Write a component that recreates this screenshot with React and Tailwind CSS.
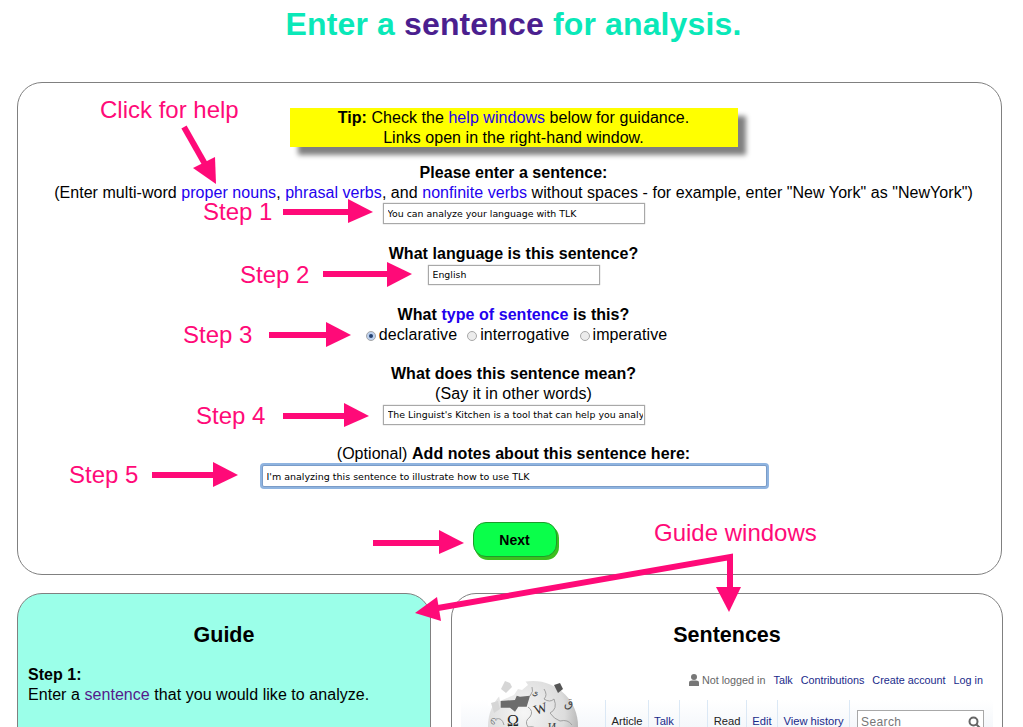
const font = { fontFamily: '"Liberation Sans", Arial, sans-serif' }

function Label({ className, children }) {
  return <div className={`absolute whitespace-nowrap text-[24px] leading-7 tracking-normal text-[#ff0a78] ${className}`}>{children}</div>
}

function Link({ children }) {
  return <span className="text-[#2200ee]">{children}</span>
}

function Field({ value, className }) {
  return (
    <input
      readOnly
      value={value}
      className={`block bg-white border border-[#a8a8a8] shadow-[0_0_1px_#a8a8a8] pl-[4px] pr-[1px] text-[9.4px] tracking-normal text-black outline-none font-['DejaVu_Sans',sans-serif] ${className}`}
    />
  )
}

function Radio({ checked, label }) {
  return (
    <span className="flex items-center">
      <span className={`flex items-center justify-center w-[10px] h-[10px] rounded-full border border-[#a8a8a8] mr-[3px] mt-[2px] ${checked ? 'bg-[#bcd0ee]' : 'bg-[#ececec]'}`}>
        {checked && <span className="w-[4px] h-[4px] rounded-full bg-[#24406e]" />}
      </span>
      {label}
    </span>
  )
}

// pink annotation arrows, drawn in page coordinates over the form
function Arrows() {
  const straight = [
    [283, 348, 212, 199, 223, 373],
    [323, 387, 274, 262, 287, 412],
    [269, 326, 335, 322, 347, 351],
    [283, 344, 416, 403, 427, 369],
    [152, 213, 475, 462, 487, 238],
    [373, 439, 543, 530, 554, 464],
  ]
  return (
    <svg className="absolute inset-0 w-[1023px] h-[727px] pointer-events-none" viewBox="0 0 1023 727">
      <g fill="#ff0a78" stroke="none">
        {straight.map(([x1, x2, y, top, bottom, tip]) => (
          <g key={y}>
            <rect x={x1} y={y - 3} width={x2 - x1 + 1} height="6" />
            <polygon points={`${x2},${top} ${tip},${y} ${x2},${bottom}`} />
          </g>
        ))}
        <polygon points="193,168 215,157 216,184" />
        <polygon points="716,587 741,587 729,612" />
        <polygon points="415,613 437,597 441,621" />
      </g>
      <g stroke="#ff0a78" strokeWidth="6" fill="none">
        <line x1="184" y1="127" x2="205" y2="164" />
        <polyline points="438,608 730,557 730,590" />
      </g>
    </svg>
  )
}

function WikiGlobe() {
  return (
    <svg width="90" height="90" viewBox="0 0 90 90">
      <defs>
        <radialGradient id="globe" cx="40%" cy="35%" r="70%">
          <stop offset="0%" stopColor="#f6f6f6" />
          <stop offset="65%" stopColor="#dcdcdc" />
          <stop offset="100%" stopColor="#a4a4a4" />
        </radialGradient>
      </defs>
      <circle cx="45" cy="45" r="45" fill="url(#globe)" />
      {/* missing puzzle pieces at the top left */}
      <path d="M-2 -2 H36 L40 4 L34 9 L30 8 L26 14 L12 20 L10 10 L6 18 L3 24 L-2 26 Z" fill="#fff" />
      <path d="M17 0 L13 8 L18 12 L24 6 L22 2 Z M3 22 L10 20 L12 28 L6 32 Z" fill="#d6d6d6" />
      <path d="M12.7 20 L27 19 L28.7 14.7 L32 15.7 L42 14.7 L38.7 25.7 L30.3 25.7 L27 30.7 L22 26.7 L12.7 26.7 Z" fill="#6c6c6c" />
      <path d="M42 15 Q46 10 44 6 M40 26 Q46 30 42 36 Q36 40 40 46 M56 8 Q60 14 56 18 Q62 22 66 18 M66 18 Q70 28 62 32 Q66 38 72 40 M72 40 Q80 38 84 44 M40 46 Q50 44 52 54 M20 44 Q24 50 18 56 M8 38 Q14 36 16 44" stroke="#a0a0a0" strokeWidth="1" fill="none" />
      <text x="25" y="45" fontSize="16" fill="#222" textAnchor="middle" fontFamily="Liberation Serif, serif">Ω</text>
      <text x="54" y="32" fontSize="14" fill="#333" textAnchor="middle" fontFamily="Liberation Serif, serif" transform="rotate(-18 54 32)">W</text>
      <text x="80" y="26" fontSize="12" fill="#444" textAnchor="middle" fontFamily="Liberation Serif, serif">ق</text>
      <text x="47" y="14" fontSize="8" fill="#444" textAnchor="middle" fontFamily="Liberation Serif, serif">ي</text>
      <path d="M66 4 L72 2 L75 8 L70 12 Z" fill="#555" />
      <text x="5" y="42" fontSize="7" fill="#555" textAnchor="middle" fontFamily="Liberation Serif, serif" transform="rotate(-70 5 40)">の</text>
      <text x="64" y="50" fontSize="12" fill="#444" textAnchor="middle" fontFamily="Liberation Serif, serif">И</text>
    </svg>
  )
}

function Tab({ className, children }) {
  return <span className={`h-[40px] pt-[15px] text-center border-l border-[#dbe8f5] ${className}`}>{children}</span>
}

function WikiHeader() {
  return (
    <div className="relative mx-[9px] mt-[26px] h-[80px] text-[10.8px] leading-[13px] tracking-normal text-[#1a2a8a]">
      <div className="flex justify-end items-center gap-[8px] pr-[10px] h-[14px]">
        <span className="flex items-center gap-[3px] text-[#666]">
          <svg width="10" height="12" viewBox="0 0 10 12"><circle cx="5" cy="3" r="3" fill="#777" /><path d="M0 12 V8.5 Q0 6.5 3 6.5 H7 Q10 6.5 10 8.5 V12 Z" fill="#777" /></svg>
          Not logged in
        </span>
        <span>Talk</span>
        <span>Contributions</span>
        <span>Create account</span>
        <span>Log in</span>
      </div>
      <div className="flex mt-[13px] pl-[144px] h-[40px] text-[11.2px] bg-gradient-to-b from-white to-[#f0f4f9]">
        <Tab className="w-[43px] text-[#222]">Article</Tab>
        <Tab className="w-[31px]">Talk</Tab>
        <Tab className="w-[28px]" />
        <Tab className="w-[39px] text-[#222]">Read</Tab>
        <Tab className="w-[31px]">Edit</Tab>
        <Tab className="w-[72px]">View history</Tab>
        <div className="h-[40px] border-l border-[#dbe8f5] pl-[7px] pt-[10px]">
          <div className="flex items-center justify-between w-[127px] h-[24px] border border-[#a8a8a8] bg-white pl-[3px] pr-[2px] text-[12px] tracking-[0.4px] text-[#777]">
            Search
            <svg width="13" height="13" viewBox="0 0 13 13" fill="none" stroke="#666" strokeWidth="2"><circle cx="5.5" cy="5.5" r="4" /><line x1="8.5" y1="8.5" x2="12" y2="12" /></svg>
          </div>
        </div>
      </div>
      <div className="absolute left-[27px] top-[8px]"><WikiGlobe /></div>
    </div>
  )
}

export default function App() {
  return (
    <div className="relative w-[1023px] h-[727px] overflow-hidden bg-white text-black text-[16px] leading-5 tracking-[0.05px]" style={font}>
      <h1 className="h-[82px] pt-[6px] pl-[4px] text-center text-[32px] leading-9 tracking-[0.14px] font-bold text-[#0ae8b8]">
        Enter a <span className="text-[#4b1f8f]">sentence</span> for analysis.
      </h1>

      <div className="mx-[17px] w-[985px] h-[493px] border border-[#808080] rounded-[25px] pt-[25px] pl-[8px] flex flex-col items-center">
        <div className="w-[448px] h-[39px] bg-[#ffff00] text-center shadow-[8px_8px_5px_#808080]">
          <b>Tip:</b> Check the <Link>help windows</Link> below for guidance.
          <br />
          Links open in the right-hand window.
        </div>

        <p className="mt-[16px] font-bold">Please enter a sentence:</p>
        <p className="whitespace-nowrap">
          (Enter multi-word <Link>proper nouns</Link>, <Link>phrasal verbs</Link>, and <Link>nonfinite verbs</Link> without spaces - for example, enter "New York" as "NewYork")
        </p>
        <Field value="You can analyze your language with TLK" className="w-[262px] h-[21px]" />

        <p className="mt-[20px] font-bold">What language is this sentence?</p>
        <Field value="English" className="w-[172px] h-[20px] mt-[1px]" />

        <p className="mt-[20px] font-bold">What <span className="text-[#2200ee]">type of sentence</span> is this?</p>
        <div className="flex gap-[10px] ml-[6px] tracking-[0.1px]">
          <Radio checked label="declarative" />
          <Radio label="interrogative" />
          <Radio label="imperative" />
        </div>

        <p className="mt-[19px] font-bold">What does this sentence mean?</p>
        <p>(Say it in other words)</p>
        <Field value="The Linguist's Kitchen is a tool that can help you analyze your language" className="w-[262px] h-[20px] mt-[1px]" />

        <p className="mt-[19px]">(Optional) <b>Add notes about this sentence here:</b></p>
        <input
          readOnly
          value="I'm analyzing this sentence to illustrate how to use TLK"
          className="block w-[505px] h-[22px] mt-[1px] ml-[1px] bg-white border border-[#7a9cc8] rounded-[2px] px-[4px] text-[9.5px] tracking-normal text-black outline-none shadow-[0_0_0_2px_#8fb4e0] font-['DejaVu_Sans',sans-serif]"
        />

        <button className="mt-[35px] ml-[2px] w-[84px] h-[35px] rounded-[13px] bg-[#0aff4a] border border-[#1f9a2a] font-bold text-[14px] shadow-[2px_3px_0_#3cbf1f]">
          Next
        </button>
      </div>

      <div className="flex mt-[18px] ml-[17px]">
        <div className="w-[414px] h-[260px] border border-[#808080] rounded-[25px] bg-[#9bffe9] px-[10px]">
          <h2 className="mt-[29px] text-center text-[21.5px] leading-6 tracking-normal font-bold">Guide</h2>
          <p className="mt-[18px] font-bold">Step 1:</p>
          <p>Enter a <span className="text-[#551a8b]">sentence</span> that you would like to analyze.</p>
          <p className="mt-[20px] font-bold">Step 2:</p>
        </div>
        <div className="w-[552px] h-[260px] ml-[20px] border border-[#808080] rounded-[25px] bg-white overflow-hidden">
          <h2 className="mt-[29px] text-center text-[21.5px] leading-6 tracking-normal font-bold">Sentences</h2>
          <WikiHeader />
        </div>
      </div>

      <Label className="left-[100px] top-[96px]">Click for help</Label>
      <Label className="left-[203px] top-[198px]">Step 1</Label>
      <Label className="left-[240px] top-[261px]">Step 2</Label>
      <Label className="left-[183px] top-[321px]">Step 3</Label>
      <Label className="left-[196px] top-[402px]">Step 4</Label>
      <Label className="left-[69px] top-[461px]">Step 5</Label>
      <Label className="left-[654px] top-[519px]">Guide windows</Label>
      <Arrows />
    </div>
  )
}
